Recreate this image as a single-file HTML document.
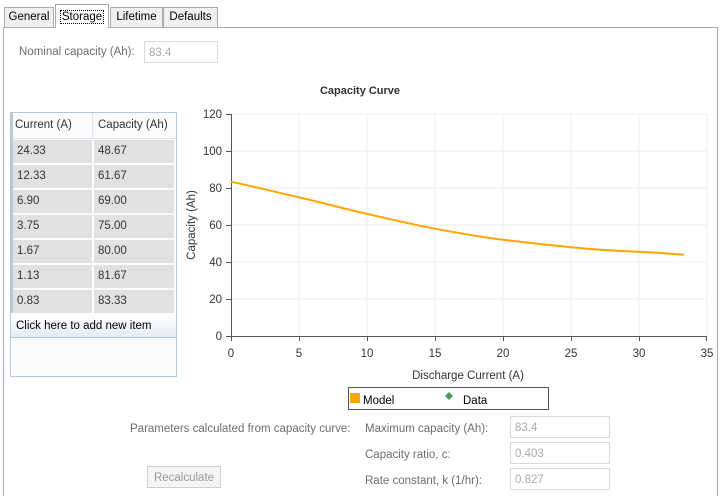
<!DOCTYPE html><html><head><style>
body{margin:0;width:720px;height:497px;background:#fff;font-family:"Liberation Sans",sans-serif;font-size:11.5px;color:#000;position:relative;overflow:hidden}
.a{position:absolute}
.tab{position:absolute;top:7px;height:19px;background:#f0f0f0;border:1px solid #acacac;border-bottom:none;line-height:19px;text-align:center}
.box{position:absolute;border:1px solid #d9d9d9;background:#fff;color:#aaa;height:22px;line-height:22px;padding-left:4px;box-sizing:border-box}
.g{color:#6d6d6d}
.cell{position:absolute;background:#e1e1e1;height:23px;line-height:23px;padding-left:4px;box-sizing:border-box;color:#333}
</style></head><body>
<div class="a" style="left:3px;top:27px;width:713px;height:468px;border:1px solid #acacac;border-bottom:none"></div>
<div class="tab" style="left:4px;width:48px">General</div>
<div class="tab" style="left:55px;top:4px;height:23px;width:52px;background:#fff;line-height:25px"><span style="outline:1px dotted #000;padding:0 1px">Storage</span></div>
<div class="tab" style="left:110px;width:51px">Lifetime</div>
<div class="tab" style="left:163px;width:53px">Defaults</div>
<div class="a g" style="left:19px;top:46px">Nominal capacity (Ah):</div>
<div class="box" style="left:144px;top:41px;width:74px">83.4</div>
<div class="a" style="left:10px;top:112px;width:167px;height:265px;border:1px solid #b7c7db;background:#fcfcfc;box-sizing:border-box"></div>
<div class="a" style="left:11px;top:113px;width:165px;height:25px;background:#fafbfd;border-bottom:1px solid #dfe6ef"></div>
<div class="a" style="left:92px;top:113px;width:1px;height:25px;background:#dfe6ef"></div>
<div class="a" style="left:11px;top:113px;width:2px;height:200px;background:#c0c8d3"></div>
<div class="a" style="left:15px;top:119px;color:#333">Current (A)</div>
<div class="a" style="left:98px;top:119px;color:#333">Capacity (Ah)</div>
<div id="rows"></div>
<div class="a" style="left:11px;top:315px;width:165px;height:23px;background:linear-gradient(#fff,#e6ebf2);border-bottom:1px solid #b7c7db;line-height:23px;padding-left:5px;box-sizing:border-box">Click here to add new item</div>
<script>
var d=[["24.33","48.67"],["12.33","61.67"],["6.90","69.00"],["3.75","75.00"],["1.67","80.00"],["1.13","81.67"],["0.83","83.33"]],h="";
d.forEach(function(r,i){var t=140+i*25;h+='<div class="cell" style="left:13px;top:'+t+'px;width:79px">'+r[0]+'</div><div class="cell" style="left:94px;top:'+t+'px;width:80px">'+r[1]+'</div>'});
document.getElementById("rows").innerHTML=h;
</script>
<svg class="a" style="left:0;top:0" width="720" height="497" font-family="Liberation Sans" font-size="11.5">
<text x="360" y="94" text-anchor="middle" font-weight="bold" fill="#333" font-size="11">Capacity Curve</text>
<g stroke="#ececec">
<line x1="231" y1="114" x2="707" y2="114"/><line x1="231" y1="151" x2="707" y2="151"/><line x1="231" y1="188" x2="707" y2="188"/><line x1="231" y1="225" x2="707" y2="225"/><line x1="231" y1="262" x2="707" y2="262"/><line x1="231" y1="299" x2="707" y2="299"/>
<line x1="299" y1="114" x2="299" y2="336"/><line x1="367" y1="114" x2="367" y2="336"/><line x1="435" y1="114" x2="435" y2="336"/><line x1="503" y1="114" x2="503" y2="336"/><line x1="571" y1="114" x2="571" y2="336"/><line x1="639" y1="114" x2="639" y2="336"/><line x1="707" y1="114" x2="707" y2="336"/>
</g>
<g stroke="#555"><line x1="231.5" y1="114" x2="231.5" y2="341"/><line x1="226" y1="336.5" x2="707" y2="336.5"/>
<line x1="226" y1="114.5" x2="231" y2="114.5"/><line x1="226" y1="151.5" x2="231" y2="151.5"/><line x1="226" y1="188.5" x2="231" y2="188.5"/><line x1="226" y1="225.5" x2="231" y2="225.5"/><line x1="226" y1="262.5" x2="231" y2="262.5"/><line x1="226" y1="299.5" x2="231" y2="299.5"/>
<line x1="299.5" y1="336" x2="299.5" y2="341"/><line x1="367.5" y1="336" x2="367.5" y2="341"/><line x1="435.5" y1="336" x2="435.5" y2="341"/><line x1="503.5" y1="336" x2="503.5" y2="341"/><line x1="571.5" y1="336" x2="571.5" y2="341"/><line x1="639.5" y1="336" x2="639.5" y2="341"/><line x1="706.5" y1="336" x2="706.5" y2="341"/></g>
<g fill="#333" text-anchor="end"><text x="222" y="118">120</text><text x="222" y="155">100</text><text x="222" y="192">80</text><text x="222" y="229">60</text><text x="222" y="266">40</text><text x="222" y="303">20</text><text x="222" y="340">0</text></g>
<g fill="#333" text-anchor="middle"><text x="231" y="357">0</text><text x="299" y="357">5</text><text x="367" y="357">10</text><text x="435" y="357">15</text><text x="503" y="357">20</text><text x="571" y="357">25</text><text x="639" y="357">30</text><text x="707" y="357">35</text>
<text x="468" y="379">Discharge Current (A)</text>
<text transform="translate(195,225) rotate(-90)">Capacity (Ah)</text></g>
<path d="M231,181.7 C260,188 280,193 299,197.3 S345,209 367,213.9 S410,224 435,228.7 S480,237 503,239.8 S550,245 571,247.2 S620,251 639,251.8 S670,253.8 684,254.6" fill="none" stroke="#ffa500" stroke-width="2"/>
<rect x="348.5" y="387.5" width="200" height="22" fill="#fff" stroke="#555"/>
<rect x="350" y="393" width="10" height="10" fill="#ffa500"/>
<text x="363" y="404">Model</text>
<path d="M449,392 L453,396 449,400 445,396Z" fill="#4e9a5a"/>
<text x="463" y="404">Data</text>
</svg>
<div class="a g" style="left:130px;top:423px">Parameters calculated from capacity curve:</div>
<div class="a g" style="left:365px;top:423px">Maximum capacity (Ah):</div>
<div class="a g" style="left:365px;top:449px">Capacity ratio, c:</div>
<div class="a g" style="left:365px;top:475px">Rate constant, k (1/hr):</div>
<div class="box" style="left:510px;top:416px;width:100px">83.4</div>
<div class="box" style="left:510px;top:442px;width:100px">0.403</div>
<div class="box" style="left:510px;top:468px;width:100px">0.827</div>
<div class="a" style="left:147px;top:466px;width:74px;height:22px;border:1px solid #d0d0d0;background:#f4f4f4;color:#999;text-align:center;line-height:22px;box-sizing:border-box">Recalculate</div>
</body></html>
